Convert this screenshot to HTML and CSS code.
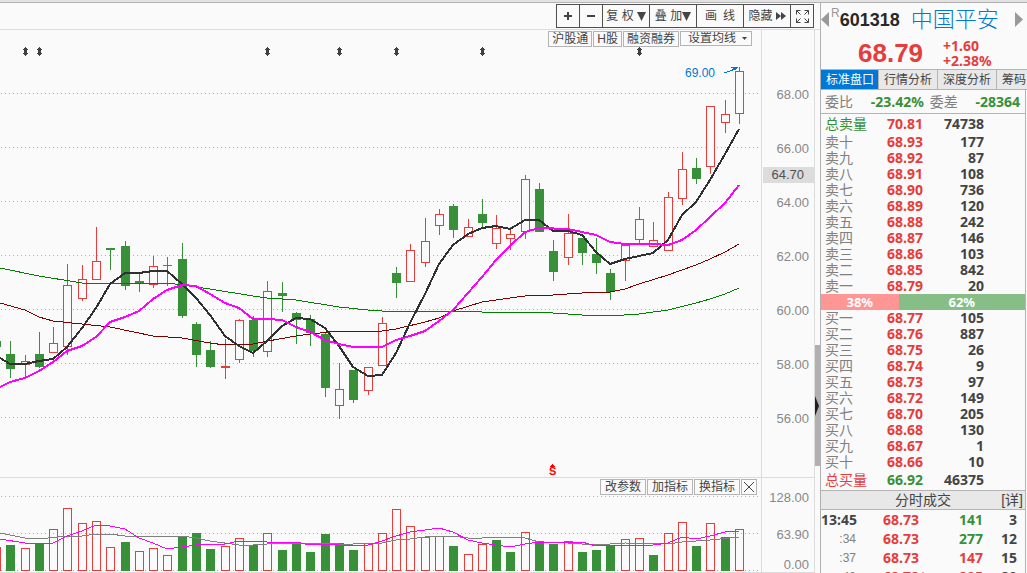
FILE: index.html
```html
<!DOCTYPE html>
<html lang="zh-CN">
<head>
<meta charset="utf-8">
<title>中国平安 601318</title>
<link rel="stylesheet" href="styles.css">
</head>
<body>
<main class="workspace">
  <div class="topbar">
    <div class="toolbar" role="toolbar" aria-label="图表工具">
      <button class="tool tool-icon" aria-label="放大"><svg width="8" height="8" viewBox="0 0 8 8"><path d="M3 0h2v3h3v2H5v3H3V5H0V3h3z"/></svg></button>
      <button class="tool tool-icon" aria-label="缩小"><svg width="8" height="8" viewBox="0 0 8 8"><path d="M0 3h8v2H0z"/></svg></button>
      <button class="tool tool-wide">复 权<svg class="gap-left" width="9" height="9" viewBox="0 0 9 9"><path d="M0 0h9L4.500 9z"/></svg></button>
      <button class="tool tool-wide">叠 加<svg width="9" height="9" viewBox="0 0 9 9"><path d="M0 0h9L4.500 9z"/></svg></button>
      <button class="tool tool-wide">画&ensp;线</button>
      <button class="tool tool-wide">隐藏<svg class="gap-left" width="10" height="8" viewBox="0 0 10 8"><path d="M0 0l5 4-5 4zM5 0l5 4-5 4z"/></svg></button>
      <button class="tool tool-icon" aria-label="全屏"><svg class="lines" width="13" height="13" viewBox="0 0 13 13"><path d="M4.500 .5h-4v4M.5 .5l4 4M8.500 .5h4v4M12.500 .5l-4 4M4.500 12.500h-4v-4M.5 12.500l4-4M8.500 12.500h4v-4M12.500 12.500l-4-4"/></svg></button>
    </div>
  </div>
  <div class="board">
    <div class="plots">
      <section class="plot" aria-label="日K线">
        <svg class="canvas" id="price" viewBox="0 30 761 447" preserveAspectRatio="none"></svg>
        <div class="overlay overlay-tags">
          <button class="tag">沪股通</button>
          <button class="tag">H股</button>
          <button class="tag">融资融券</button>
          <label class="picker"><select class="picker-select" aria-label="均线"><option>设置均线</option></select><svg class="picker-caret" width="5" height="3" viewBox="0 0 5 3"><path d="M0 0h5L2.500 3z"/></svg></label>
        </div>
      </section>
      <div class="axis axis-price">
        <span class="tick">68.00</span><span class="tick">66.00</span><span class="tick">64.00</span><span class="tick">62.00</span><span class="tick">60.00</span><span class="tick">58.00</span><span class="tick">56.00</span>
        <span class="cursor-value">64.70</span>
      </div>
      <section class="plot plot-volume" aria-label="成交量">
        <svg class="canvas" id="volume" viewBox="0 478 761 94" preserveAspectRatio="none"></svg>
        <div class="overlay overlay-indicators">
          <button class="tag">改参数</button>
          <button class="tag">加指标</button>
          <button class="tag">换指标</button>
          <button class="tag tag-close" aria-label="关闭"><svg class="lines" width="10" height="10" viewBox="0 0 10 10"><path d="M0 0l10 10M10 0L0 10"/></svg></button>
        </div>
      </section>
      <div class="axis axis-volume">
        <span class="vtick">128.00</span><span class="vtick">63.90</span><span class="vtick vtick-base">0.00</span>
      </div>
    </div>
    <div class="splitter"><div class="splitter-grip"><svg width="5" height="20" viewBox="0 0 5 20"><path d="M0 0l4 10-4 10z"/></svg></div></div>
  </div>
</main>
<aside class="quote">
  <header class="stock">
    <button class="nav" aria-label="上一只"><svg width="8" height="15" viewBox="0 0 8 15"><path d="M8 0v15L0 7.500z"/></svg></button>
    <span class="margin-flag">R</span>
    <span class="code">601318</span>
    <h1 class="name">中国平安</h1>
    <button class="nav nav-next" aria-label="下一只"><svg width="8" height="15" viewBox="0 0 8 15"><path d="M0 0v15l8-7.500z"/></svg></button>
  </header>
  <div class="last">
    <span class="last-price">68.79</span>
    <div class="change"><span>+1.60</span><span>+2.38%</span></div>
  </div>
  <div class="tabs" role="tablist">
    <button class="tab tab-active" role="tab" aria-selected="true">标准盘口</button>
    <button class="tab" role="tab">行情分析</button>
    <button class="tab" role="tab">深度分析</button>
    <button class="tab" role="tab">筹码</button>
  </div>
  <div class="depth">
    <div class="ratio"><span>委比</span><b class="down">-23.42%</b><span>委差</span><b class="down">-28364</b></div>
    <table class="book">
      <tbody>
        <tr class="total"><th class="down">总卖量</th><td class="up">70.81</td><td>74738</td></tr>
        <tr><th>卖十</th><td class="up">68.93</td><td>177</td></tr>
        <tr><th>卖九</th><td class="up">68.92</td><td>87</td></tr>
        <tr><th>卖八</th><td class="up">68.91</td><td>108</td></tr>
        <tr><th>卖七</th><td class="up">68.90</td><td>736</td></tr>
        <tr><th>卖六</th><td class="up">68.89</td><td>120</td></tr>
        <tr><th>卖五</th><td class="up">68.88</td><td>242</td></tr>
        <tr><th>卖四</th><td class="up">68.87</td><td>146</td></tr>
        <tr><th>卖三</th><td class="up">68.86</td><td>103</td></tr>
        <tr><th>卖二</th><td class="up">68.85</td><td>842</td></tr>
        <tr><th>卖一</th><td class="up">68.79</td><td>20</td></tr>
      </tbody>
    </table>
    <div class="balance"><span class="balance-buy" style="width:38%">38%</span><span class="balance-sell">62%</span></div>
    <table class="book">
      <tbody>
        <tr><th>买一</th><td class="up">68.77</td><td>105</td></tr>
        <tr><th>买二</th><td class="up">68.76</td><td>887</td></tr>
        <tr><th>买三</th><td class="up">68.75</td><td>26</td></tr>
        <tr><th>买四</th><td class="up">68.74</td><td>9</td></tr>
        <tr><th>买五</th><td class="up">68.73</td><td>97</td></tr>
        <tr><th>买六</th><td class="up">68.72</td><td>149</td></tr>
        <tr><th>买七</th><td class="up">68.70</td><td>205</td></tr>
        <tr><th>买八</th><td class="up">68.68</td><td>130</td></tr>
        <tr><th>买九</th><td class="up">68.67</td><td>1</td></tr>
        <tr><th>买十</th><td class="up">68.66</td><td>10</td></tr>
        <tr class="total"><th class="up">总买量</th><td class="down">66.92</td><td>46375</td></tr>
      </tbody>
    </table>
    <div class="trades-head"><h2 class="trades-title">分时成交</h2><a class="trades-more" href="#detail">[详]</a></div>
    <table class="trades">
      <tbody>
        <tr><th class="trade-minute">13:45</th><td class="up">68.73</td><td class="down">141</td><td>3</td></tr>
        <tr><th>:34</th><td class="up">68.73</td><td class="down">277</td><td>12</td></tr>
        <tr><th>:37</th><td class="up">68.73</td><td class="up">147</td><td>15</td></tr>
        <tr><th>:40</th><td class="up">68.78<svg width="8" height="10" viewBox="0 0 8 10"><path d="M4 0l4 4H5v6H3V4H0z"/></svg></td><td class="up">205</td><td>20</td></tr>
      </tbody>
    </table>
  </div>
</aside>
<script src="chart.js"></script>
</body>
</html>
```

FILE: styles.css
```css
* { box-sizing: border-box; }

body {
  margin: 0;
  height: 100vh;
  overflow: hidden;
  display: flex;
  border-top: 2px solid #e2e2e2;
  background: #fafafa;
  color: #444;
  font: 12px/16px "Liberation Sans", "Noto Sans CJK SC", sans-serif;
}

button, select {
  margin: 0;
  padding: 0;
  border: 0;
  border-radius: 0;
  background: none;
  color: inherit;
  font: inherit;
  white-space: nowrap;
}

svg { fill: currentColor; flex: none; }
.lines { fill: none; stroke: currentColor; }
.up { color: #e63c3c; }
.down { color: #389038; }

.workspace {
  flex: 1;
  min-width: 0;
  display: flex;
  flex-direction: column;
  border-top: 1px solid #b4b4b4;
}

/* toolbar */
.topbar {
  height: 27px;
  padding: 1px 6px 0 0;
  display: flex;
  justify-content: flex-end;
  border-bottom: 1px solid #dcdcdc;
}
.toolbar { display: flex; height: 24px; border: 1px solid #505050; }
.tool {
  display: flex;
  align-items: center;
  justify-content: center;
  border-left: 1px solid #505050;
}
.tool:first-child { border-left: 0; width: 22px; }
.tool-icon { width: 23px; }
.tool-wide { width: 47px; }
.gap-left { margin-left: 3px; }

/* plots */
.board { flex: 1; min-height: 0; display: flex; }
.plots {
  flex: 1;
  min-width: 0;
  display: grid;
  grid-template-columns: 1fr 54px;
  grid-template-rows: 1fr 95px;
}
.plot { position: relative; min-width: 0; min-height: 0; border-bottom: 1px solid #dcdcdc; }
.canvas { display: block; width: 100%; height: 100%; position: absolute; inset: 0; shape-rendering: crispEdges; fill: none; }
.overlay { position: absolute; display: flex; align-items: flex-start; gap: 1px; }
.overlay-tags { top: 1px; right: 9px; }
.overlay-indicators { top: 1px; right: 4px; }
.tag {
  height: 16px;
  padding: 0 4px;
  border: 1px solid #b4b4b4;
  background: #fafafa;
  line-height: 14px;
}
.overlay-tags .tag { padding: 0 3px; }
.tag-close { width: 16px; padding: 2px; display: flex; }
.picker {
  display: flex;
  align-items: center;
  gap: 6px;
  height: 15px;
  padding: 0 4px 0 7px;
  border: 1px solid #b4b4b4;
  background: #fafafa;
}
.picker-select { appearance: none; width: 48px; line-height: 13px; }

.grid { stroke: #b0b0b0; stroke-dasharray: 1 3; }
.rise { stroke: #e63c3c; fill: #fafafa; }
.rise-bar { stroke: #e63c3c; fill: none; }
.fall { stroke: #389038; fill: none; }
.fall-body { fill: #389038; }
.ma { fill: none; }
.ma5 { stroke: #303030; stroke-width: 2; }
.ma10 { stroke: #ff00ff; stroke-width: 2; }
.ma30 { stroke: #800000; }
.ma60 { stroke: #008000; }
.vma5 { stroke: #ff00ff; }
.vma10 { stroke: #808080; }
.event { fill: #404040; }
.peak { fill: #0078d7; stroke: none; font-size: 12px; }
.peak-line { stroke: #0078d7; }
.signal { fill: #f00; font-size: 11px; font-weight: bold; }

.axis {
  min-height: 0;
  overflow: hidden;
  border: solid #dcdcdc;
  border-width: 0 1px 1px 1px;
  color: #888;
  font-size: 13px;
  text-align: right;
}
.axis-price { position: relative; padding-top: 38px; }
.axis-volume { padding-top: 1px; }
.tick, .vtick { display: block; padding-right: 5px; }
.tick { line-height: 54px; }
.vtick { line-height: 37px; }
.vtick-base { line-height: 24px; height: 19px; }
.cursor-value {
  position: absolute;
  top: 137px;
  left: 1px;
  right: 0;
  padding-right: 10px;
  background: #dcdcdc;
  color: #505050;
}

.splitter { width: 5px; padding-top: 315px; }
.splitter-grip { height: 121px; display: flex; align-items: center; background: #b0b0b0; color: #202020; }

/* quote panel */
.quote {
  width: 207px;
  overflow: hidden;
  border: solid #b0b0b0;
  border-width: 1px 0 0 1px;
}
.stock { height: 33px; display: flex; align-items: center; }
.nav { display: flex; color: #999; }
.nav-next { margin: 0 4px 0 auto; }
.margin-flag { align-self: flex-start; margin: 2px 0 0 2px; color: #999; font-size: 12px; }
.code { color: #282828; font-size: 18px; font-weight: bold; }
.name { margin: 0 0 0 11px; color: #0078d7; font-size: 22px; font-weight: 300; line-height: 32px; }
.last { height: 33px; display: flex; align-items: center; gap: 20px; padding-left: 37px; color: #e63c3c; font-weight: bold; }
.last-price { font-size: 26px; line-height: 32px; }
.change { display: flex; flex-direction: column; font: bold 14px/15px "Noto Sans", sans-serif; }
.tabs { height: 21px; display: flex; border: solid #b4b4b4; border-width: 1px 0; background: #e8e8e8; }
.tab { flex: none; width: 59px; padding-left: 5px; border-right: 1px solid #b4b4b4; text-align: left; }
.tab-active { width: 58px; background: #0078d7; color: #fff; }
.depth { margin-right: 1px; border-right: 1px solid #b4b4b4; font-size: 14px; }
.ratio {
  height: 24px;
  display: flex;
  align-items: center;
  justify-content: space-between;
  padding: 0 5px 0 4px;
  border-bottom: 1px solid #b4b4b4;
  color: #808080;
}
.ratio b, .book td, .trades td, .balance, .trade-minute { font-family: "Noto Sans", sans-serif; font-weight: bold; }
.ratio b { margin-left: 12px; }

.book, .trades { width: 100%; border-collapse: collapse; table-layout: fixed; }
.book th, .book td, .trades th, .trades td { padding: 0; height: 16px; line-height: 16px; }
.book th { width: 66px; padding-left: 4px; color: #808080; font-weight: normal; text-align: left; }
.book .total th, .book .total td { height: 20px; line-height: 20px; }
.book .down { color: #389038; }
.book .up { color: #e63c3c; }
.book td:nth-child(2) { width: 40px; }
.book td:last-child { padding-right: 41px; text-align: right; }

.balance { display: flex; height: 16px; color: #fff; font-size: 13px; text-align: center; }
.balance-buy { background: #ff9696; }
.balance-sell { flex: 1; background: #87be87; }

.trades-head {
  height: 20px;
  display: grid;
  grid-template-columns: 1fr auto 1fr;
  align-items: center;
  border: solid #b4b4b4;
  border-width: 1px 0;
  background: #e8e8e8;
}
.trades-title { grid-column: 2; margin: 0; font-size: 14px; font-weight: normal; }
.trades-more { justify-self: end; padding-right: 2px; color: inherit; text-decoration: none; }
.trades th, .trades td { height: 19px; line-height: 18px; }
.trades th { width: 35px; color: #808080; font-size: 12px; font-weight: normal; text-align: right; }
.trades .trade-minute { color: #444; font-size: 14px; font-weight: bold; }
.trades td { text-align: right; }
.trades td:nth-child(2) { width: 84px; padding-left: 27px; text-align: left; }
.trades td:nth-child(3) { width: 43px; }
.trades td:last-child { padding-right: 8px; }
```

FILE: chart.js
```js
const NS = "http://www.w3.org/2000/svg";
const priceChart = document.getElementById("price");
const volumeChart = document.getElementById("volume");

function add(parent, name, attrs, text) {
  const el = document.createElementNS(NS, name);
  for (const key in attrs) el.setAttribute(key, attrs[key]);
  if (text) el.textContent = text;
  parent.appendChild(el);
}

// Sessions: x, direction, high, body top, body bottom, low, volume top
const sessions = [
  [-4, "g", 341, 341, 347, 347, 547], [10, "g", 341, 354, 369, 378, 545], [25, "r", 355, 361, 364, 377, 548],
  [39, "g", 332, 354, 367, 368, 543], [53, "r", 327, 343, 352, 352, 529], [67, "r", 264, 285, 346, 355, 508],
  [82, "r", 265, 279, 298, 301, 523], [96, "r", 227, 261, 279, 279, 521], [110, "g", 248, 248, 250, 270, 547],
  [125, "g", 241, 246, 286, 290, 542], [139, "g", 273, 281, 284, 292, 551], [153, "r", 256, 266, 284, 288, 548],
  [167, "r", 257, 265, 265, 286, 555], [182, "g", 243, 259, 316, 318, 536], [196, "g", 322, 324, 355, 367, 533],
  [210, "g", 341, 350, 367, 368, 549], [225, "r", 339, 366, 367, 379, 546], [239, "r", 319, 320, 359, 363, 538],
  [253, "g", 316, 320, 351, 357, 545], [267, "r", 281, 291, 351, 357, 533], [282, "g", 282, 293, 296, 312, 550],
  [296, "g", 312, 313, 320, 344, 543], [310, "g", 315, 319, 333, 346, 552], [325, "g", 333, 334, 388, 397, 534],
  [339, "r", 363, 389, 405, 419, 543], [353, "g", 370, 370, 400, 403, 550], [368, "r", 367, 367, 390, 395, 543],
  [382, "r", 317, 323, 365, 365, 533], [396, "g", 267, 273, 283, 298, 509], [410, "r", 244, 250, 281, 281, 526],
  [425, "r", 218, 241, 262, 267, 537], [439, "r", 209, 214, 225, 235, 536], [453, "g", 204, 206, 230, 238, 546],
  [468, "r", 219, 227, 236, 236, 554], [482, "g", 199, 214, 223, 227, 544], [496, "r", 215, 228, 243, 249, 540],
  [510, "r", 227, 234, 238, 250, 552], [525, "r", 175, 179, 231, 239, 532], [539, "g", 183, 189, 232, 232, 541],
  [553, "g", 240, 251, 272, 281, 544], [568, "r", 214, 233, 257, 265, 541], [582, "g", 238, 238, 253, 265, 552],
  [596, "g", 238, 254, 263, 274, 550], [610, "g", 269, 273, 292, 300, 545], [625, "r", 244, 245, 260, 281, 539],
  [639, "r", 207, 219, 239, 243, 538], [653, "r", 222, 240, 246, 246, 555], [668, "r", 192, 197, 250, 250, 533],
  [682, "r", 152, 169, 198, 205, 522], [696, "g", 158, 168, 179, 184, 546], [710, "r", 106, 106, 166, 174, 523],
  [725, "r", 100, 114, 122, 133, 537], [739, "r", 67, 71, 113, 124, 529]
];
// Volume columns coloured against the candle direction
const volumeColour = {
  "-4": "r", 110: "r", 139: "r", 396: "r", 482: "r", 339: "g", 496: "g", 510: "g", 653: "g", 725: "g"
};

for (const y of [93, 147, 201, 255, 309, 363, 417])
  add(priceChart, "path", { class: "grid", d: `M1 ${y + .5}H761` });
for (const y of [496, 533, 570])
  add(volumeChart, "path", { class: "grid", d: `M1 ${y + .5}H761` });

for (const [x, dir, high, top, bottom, low, vol] of sessions) {
  const c = x + .5;
  if (dir === "r") {
    add(priceChart, "path", { class: "rise", d: `M${c} ${high}V${top}M${c} ${bottom}V${low}` });
    add(priceChart, "rect", { class: "rise", x: c - 4, y: top + .5, width: 8, height: Math.max(bottom - top, .1) });
    if (bottom - top < 2) add(priceChart, "path", { class: "rise", d: `M${c} ${high}V${low}` });
  } else {
    add(priceChart, "path", { class: "fall", d: `M${c} ${high}V${low}` });
    add(priceChart, "rect", { class: "fall-body", x: x - 4, y: top, width: 9, height: bottom - top });
  }
  if ((volumeColour[x] || dir) === "r")
    add(volumeChart, "rect", { class: "rise-bar", x: c - 4, y: vol + .5, width: 8, height: 570 - vol });
  else
    add(volumeChart, "rect", { class: "fall-body", x: x - 4, y: vol, width: 9, height: 571 - vol });
}

const line = (chart, cls, points) => add(chart, "polyline", { class: "ma " + cls, points });

line(priceChart, "ma60", "0,268 39,276 82,283 96,284 110,283 139,283 167,283 182,285 210,289 253,296 267,298 296,300 339,307 368,310 396,312 425,311 467,311 482,312 525,312 553,313 582,315 610,316 639,314 668,310 696,303 710,299 725,294 739,288");
line(priceChart, "ma30", "0,303 25,310 39,317 53,321 82,324 110,327 153,336 182,338 210,343 225,345 253,344 268,341 296,336 310,334 339,331 368,332 382,331 396,329 425,322 439,318 453,311 482,302 510,298 525,296 553,295 582,293 610,292 625,289 639,284 668,275 682,270 696,265 710,259 725,252 739,244");
line(priceChart, "ma5", "0,358 10,364 25,364 39,361 53,359 67,347 82,328 96,308 110,284 125,273 139,273 153,271 167,271 182,284 196,298 210,315 225,336 239,346 253,353 267,341 282,326 296,318 310,319 325,328 339,346 353,367 368,376 382,375 396,353 410,323 425,294 439,264 453,245 468,234 482,228 496,226 510,229 525,220 539,220 553,231 568,231 582,235 596,252 610,264 625,259 639,256 653,253 668,240 682,215 696,202 710,180 725,154 739,129");
line(priceChart, "ma10", "0,387 10,382 25,378 39,371 53,362 67,351 82,346 96,337 110,322 125,317 139,311 153,299 167,290 182,285 196,286 210,294 225,303 239,308 253,319 267,319 282,320 296,327 310,332 325,340 339,344 353,347 382,347 396,340 410,336 425,331 439,321 453,310 468,293 482,277 496,260 510,246 525,232 539,228 568,229 582,232 596,235 610,242 625,244 653,244 668,245 682,240 696,230 710,217 725,203 739,185");
line(volumeChart, "vma10", "0,533 25,538 39,539 67,536 82,536 96,534 110,534 125,536 153,536 167,537 182,536 196,538 210,541 239,545 253,545 267,544 296,543 325,543 339,544 353,544 368,543 382,543 396,540 410,539 425,537 439,536 453,536 468,538 482,538 496,537 525,538 539,542 568,543 596,545 625,543 668,544 682,542 710,540 739,537");
line(volumeChart, "vma5", "0,539 25,543 53,543 67,536 82,531 96,525 110,526 125,529 139,538 153,543 167,549 182,547 196,545 225,544 239,541 267,542 282,543 296,542 310,545 325,544 339,545 368,545 382,541 396,536 410,532 425,530 439,528 453,532 468,540 482,543 510,547 525,544 539,542 582,542 596,546 625,545 653,545 668,543 682,537 696,539 710,536 725,532 739,531");

for (const x of [25, 39, 267, 339, 396, 482, 639])
  add(priceChart, "path", { class: "event", d: `M${x} 47h1v1h1v1h1v1h-1v3h1v1h-1v1h-1v1h-1v-1h-1v-1h-1v-1h1v-3h-1v-1h1v-1h1z` });

add(priceChart, "text", { class: "peak", x: 685, y: 77 }, "69.00");
add(priceChart, "path", { class: "peak-line", d: "M724 72.500h3M727 71.500h3M730 70.500h3M732 69.500h4M733 68.500h4M731 67.500h7" });
add(priceChart, "text", { class: "signal", x: 549, y: 475 }, "S");
add(priceChart, "path", { fill: "#f00", d: "M552 464h1v1h1v1h1v1h-5v-1h1v-1h1z" });
```
